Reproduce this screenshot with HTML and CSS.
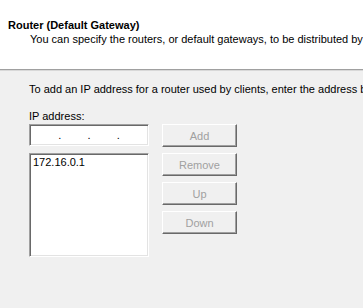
FILE: index.html
```html
<!DOCTYPE html>
<html lang="en">
<head>
    <meta charset="UTF-8">
    <title>Router (Default Gateway)</title>
    <link rel="stylesheet" href="styles.css">
</head>
<body>
    <div id="header">
        <div class="title">Router (Default Gateway)</div>
        <div class="subtitle">You can specify the routers, or default gateways, to be distributed by this scope.</div>
    </div>
    <div id="content">
        <div class="intro">To add an IP address for a router used by clients, enter the address below.</div>
        <div class="field-label">IP address:</div>
        <div class="row">
            <div class="left-col">
                <div class="ip-input">
                    <span class="octet"></span><span class="dot">.</span>
                    <span class="octet"></span><span class="dot">.</span>
                    <span class="octet"></span><span class="dot">.</span>
                    <span class="octet"></span>
                </div>
                <div class="list-box">
                    <div class="list-item">172.16.0.1</div>
                </div>
            </div>
            <div class="btn-col">
                <button class="btn" disabled>Add</button>
                <button class="btn" disabled>Remove</button>
                <button class="btn" disabled>Up</button>
                <button class="btn" disabled>Down</button>
            </div>
        </div>
    </div>
</body>
</html>
```

FILE: styles.css
```css
body {
    margin: 0;
    width: 363px;
    height: 308px;
    overflow: hidden;
    background-color: #f0f0f0;
    font-family: "Liberation Sans", Arial, sans-serif;
    font-size: 11px;
    line-height: 13px;
    color: #000;
    white-space: nowrap;
}
#header {
    background: #fff;
    height: 70px;
    padding-top: 19px;
    box-sizing: border-box;
    border-bottom: 1px solid #a0a0a0;
    box-shadow: 0 1px 0 #d8d8d8;
    overflow: hidden;
}
.title {
    font-weight: bold;
    padding-left: 8px;
}
.subtitle {
    padding-left: 30px;
    margin-top: 1px;
}
#content {
    padding: 13px 0 0 29px;
    overflow: hidden;
}
.intro {
    margin-bottom: 14px;
}
.field-label {
    margin-bottom: 1px;
}
.row {
    display: flex;
    gap: 13px;
}
.left-col {
    width: 120px;
}
.ip-input,
.list-box {
    background: #fff;
    border: 1px solid;
    border-color: #a0a0a0 #fff #fff #a0a0a0;
    box-shadow: inset 1px 1px #696969, inset -1px -1px #e3e3e3;
    box-sizing: border-box;
}
.ip-input {
    height: 22px;
    display: flex;
    align-items: center;
    padding: 0 2px;
}
.octet {
    flex: 1;
}
.dot {
    width: 3px;
    text-align: center;
}
.list-box {
    margin-top: 7px;
    height: 104px;
    padding: 2px 3px;
}
.list-item {
    color: #000;
}
.btn-col {
    display: flex;
    flex-direction: column;
    gap: 6px;
}
.btn {
    flex: none;
    width: 75px;
    height: 23px;
    margin: 0;
    padding: 0;
    font-family: inherit;
    font-size: 11px;
    background: #f0f0f0;
    color: #a0a0a0;
    border: 1px solid;
    border-color: #fff #696969 #696969 #fff;
    box-shadow: inset -1px -1px #a0a0a0;
    box-sizing: border-box;
}
```
